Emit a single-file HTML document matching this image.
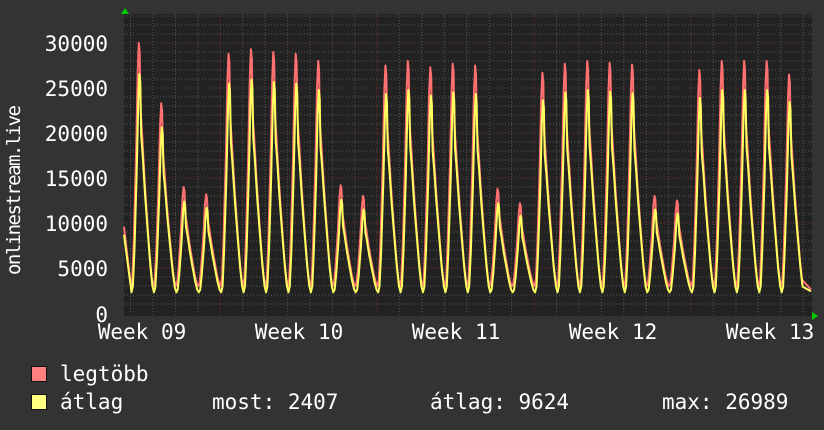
<!DOCTYPE html>
<html><head><meta charset="utf-8"><style>
html,body{margin:0;padding:0;background:#333;}
svg{display:block;font-family:"DejaVu Sans Mono","Liberation Mono",monospace;}
</style></head><body>
<svg id="s" width="824" height="430" xmlns="http://www.w3.org/2000/svg">
<rect width="824" height="430" fill="#333"/>
<rect x="124" y="14" width="688" height="302" fill="#222"/>
<g id="grid"></g>
<g fill="#fff" font-size="21" text-anchor="end">
<text x="108" y="51">30000</text><text x="108" y="96">25000</text><text x="108" y="141">20000</text>
<text x="108" y="186">15000</text><text x="108" y="231">10000</text><text x="108" y="276">5000</text>
<text x="108" y="322">0</text>
</g>
<g fill="#fff" font-size="21" text-anchor="middle">
<text x="142" y="339">Week 09</text><text x="299" y="339">Week 10</text><text x="456" y="339">Week 11</text>
<text x="613" y="339">Week 12</text><text x="770" y="339">Week 13</text>
</g>
<text x="20" y="190" fill="#fff" font-size="19" text-anchor="middle" textLength="170" transform="rotate(-90 20 190)">onlinestream.live</text>
<path id="pmax" fill="none" stroke="#ff7070" stroke-width="2" stroke-linejoin="round"/>
<path id="pavg" fill="none" stroke="#ffff60" stroke-width="2" stroke-linejoin="round"/>
<polygon points="121,14 129,14 125,8" fill="#0c0"/>
<polygon points="812,312 812,320 818,316" fill="#0c0"/>
<rect x="31.5" y="366.5" width="15" height="15" fill="#ff8080" stroke="#111"/>
<rect x="31.5" y="394.5" width="15" height="15" fill="#ffff80" stroke="#111"/>
<g fill="#fff" font-size="21">
<text x="60" y="381">legtöbb</text>
<text x="60" y="409">átlag</text>
<text x="212" y="409">most: 2407</text>
<text x="430" y="409">átlag: 9624</text>
<text x="662" y="409">max: 26989</text>
</g>
</svg>
<script>
var g=document.getElementById('grid'),h='';
function Y(v){return 313-v*0.009;}
for(var v=1000;v<=33000;v+=1000){var y=Y(v);if(y<14)break;var maj=v%5000==0;
h+='<line x1="124" x2="812" y1="'+y+'" y2="'+y+'" stroke="'+(maj?'#7a3030':'#555')+'" stroke-dasharray="1,2"/>';}
for(var k=0;k<31;k++){var x=130.5+k*22.42;if(x>812)break;var maj=((k-4)%7==0);
h+='<line y1="14" y2="316" x1="'+x+'" x2="'+x+'" stroke="'+(maj?'#7a3030':'#555')+'" stroke-dasharray="1,2"/>';}
g.innerHTML=h;
var peaks=[30000,23300,14000,13200,28800,29300,29000,28800,28000,14200,13000,27500,28000,27300,27700,27500,13800,12200,26700,27700,28000,27800,27600,13000,12500,27000,28000,28000,28000,26500];
var kp=[[0.02,0.0],[0.08,0.03],[0.15,0.2],[0.25,0.55],[0.32,0.88],[0.37,1],[0.41,0.96],[0.45,0.72],[0.52,0.62],[0.62,0.45],[0.74,0.28],[0.86,0.12],[0.95,0.03]];
var dm='M124,'+Y(9600),da='M124,'+Y(8700);
for(var d=0;d<peaks.length;d++){var x0=130.5+d*22.42;
for(var i=0;i<kp.length;i++){var x=x0+kp[i][0]*22.42;if(x>811)break;
var p=peaks[d],f=kp[i][1];
var vm=3000+f*(p-3000);
var pa=p*0.885;
var va=2300+f*(pa-2300);
dm+=' L'+x.toFixed(1)+','+Y(vm).toFixed(1);da+=' L'+(x+0.6).toFixed(1)+','+Y(va).toFixed(1);}}
dm+=' L811,'+Y(2600);da+=' L811,'+Y(2407);
document.getElementById('pmax').setAttribute('d',dm);
document.getElementById('pavg').setAttribute('d',da);
</script>
</body></html>
